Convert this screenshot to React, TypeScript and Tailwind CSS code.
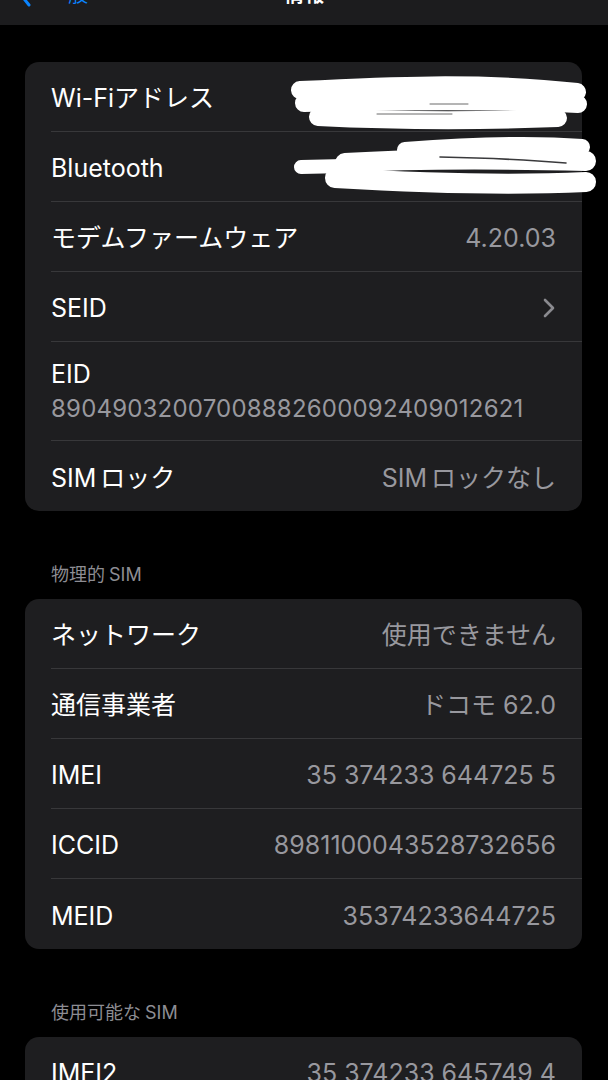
import React from "react";

type Row = { label: React.ReactNode; value?: React.ReactNode; chevron?: boolean };

function InfoRow({ label, value, chevron, last }: Row & { last?: boolean }) {
  return (
    <div className="pl-[26px]">
      <div
        className={
          "flex h-[70px] items-center justify-between pt-[3px] pr-[26px] " +
          (last ? "" : "border-b border-[#38383a]")
        }
      >
        <span className="text-[25px] leading-[28px] text-white">{label}</span>
        {value && (
          <span className="text-[25px] leading-[28px] text-[#98989e]">{value}</span>
        )}
        {chevron && (
          <svg width="12" height="20" viewBox="0 0 12 20" className="mr-[1px]">
            <polyline
              points="2,2 10,10 2,18"
              fill="none"
              stroke="#8a8a8f"
              strokeWidth="2.6"
              strokeLinecap="round"
              strokeLinejoin="round"
            />
          </svg>
        )}
      </div>
    </div>
  );
}

function Header({ children }: { children: React.ReactNode }) {
  return (
    <div className="mt-[52px] mb-[12px] h-[24px] pl-[26px] text-[18px] leading-[24px] text-[#8d8d93]">
      {children}
    </div>
  );
}

const Sim = ({ after }: { after?: boolean }) =>
  after ? <span className="ml-[4px]">SIM</span> : <span className="mr-[4px]">SIM</span>;

export default function App() {
  return (
    <div className="h-[1080px] w-[608px] overflow-hidden bg-black font-['Inter','Noto_Sans_CJK_JP',sans-serif]">
      {/* nav bar (cut off at top) */}
      <div className="relative flex h-[25px] items-start overflow-hidden bg-[#1c1c1e]">
        <div className="-mt-[17px] flex items-center pl-[18px] text-[#0a84ff]">
          <svg width="14" height="24" viewBox="0 0 14 24">
            <polyline
              points="11,2 3,12 11,22"
              fill="none"
              stroke="#0a84ff"
              strokeWidth="3"
              strokeLinecap="round"
              strokeLinejoin="round"
            />
          </svg>
          <span className="ml-[16px] text-[20px] leading-[24px]">一般</span>
        </div>
        <div className="-mt-[17px] ml-[196px] text-[20px] font-semibold leading-[24px] text-white">
          情報
        </div>
      </div>

      <div className="pt-[37px] pl-[25px] pr-[26px]">
        {/* card 1 */}
        <div className="relative rounded-[14px] bg-[#1e1e20]">
          <InfoRow label="Wi-Fiアドレス" />
          <InfoRow label="Bluetooth" />
          <InfoRow label="モデムファームウェア" value="4.20.03" />
          <InfoRow label="SEID" chevron />
          <div className="pl-[26px]">
            <div className="border-b border-[#38383a] pt-[18px] pb-[17px] pr-[26px]">
              <div className="text-[25px] leading-[28px] text-white">EID</div>
              <div className="mt-[7px] text-[24px] leading-[28px] tracking-[0.2px] text-[#98989e]">
                89049032007008882600092409012621
              </div>
            </div>
          </div>
          <InfoRow
            label={
              <>
                <Sim />
                ロック
              </>
            }
            value={
              <>
                <Sim />
                ロックなし
              </>
            }
            last
          />

          {/* redaction scribbles */}
          <svg
            className="pointer-events-none absolute left-0 top-0"
            width="580"
            height="150"
            viewBox="0 0 580 150"
            style={{ overflow: "visible" }}
          >
            <g transform="translate(-25,-62)" fill="none" strokeLinecap="round" strokeLinejoin="round">
              <path d="M300 90 C380 86 480 81 577 92" stroke="#ffffff" strokeWidth="18" />
              <path d="M304 103 C400 101 500 100 578 104" stroke="#ffffff" strokeWidth="18" />
              <path d="M318 117 C400 121 480 121 558 118" stroke="#ffffff" strokeWidth="18" />
              <path d="M430 104 L468 104" stroke="#6a6a6a" strokeWidth="1" />
              <path d="M377 114 L452 114" stroke="#6a6a6a" strokeWidth="1" />

              <path d="M301 167 L345 166" stroke="#ffffff" strokeWidth="14" />
              <path d="M335 178 C420 183 500 186 586 182" stroke="#ffffff" strokeWidth="20" />
              <path d="M345 163 C420 158 500 159 586 161" stroke="#ffffff" strokeWidth="20" />
              <path d="M405 150 C470 145 530 143 582 147" stroke="#ffffff" strokeWidth="16" />
              <path d="M440 157 C490 158 530 160 566 163" stroke="#3a3a3c" strokeWidth="1.6" />
            </g>
          </svg>
        </div>

        <Header>
          物理的
          <Sim after />
        </Header>
        <div className="rounded-[14px] bg-[#1e1e20]">
          <InfoRow label="ネットワーク" value="使用できません" />
          <InfoRow label="通信事業者" value="ドコモ 62.0" />
          <InfoRow label="IMEI" value="35 374233 644725 5" />
          <InfoRow label="ICCID" value="8981100043528732656" />
          <InfoRow label="MEID" value="35374233644725" last />
        </div>

        <Header>
          使用可能な
          <Sim after />
        </Header>
        <div className="rounded-[14px] bg-[#1e1e20]">
          <InfoRow label="IMEI2" value="35 374233 645749 4" />
        </div>
      </div>
    </div>
  );
}
